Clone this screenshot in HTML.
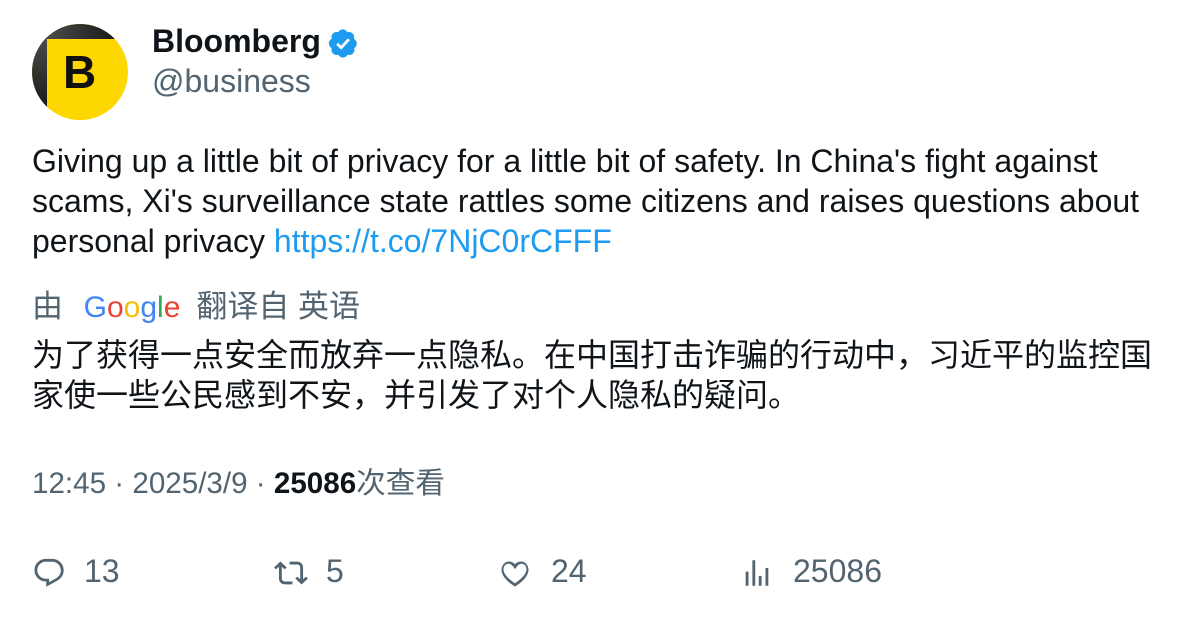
<!DOCTYPE html>
<html><head><meta charset="utf-8"><style>
body{margin:0;width:1196px;height:618px;background:#fff;font-family:"Liberation Sans","Noto Sans CJK SC",sans-serif;color:#0f1419;position:relative;overflow:hidden}
.a{position:absolute}
</style></head><body>
<div class="a" style="left:32px;top:24px;width:96px;height:96px;border-radius:50%;overflow:hidden;background:#ffd700">
 <div class="a" style="left:0;top:0;width:96px;height:15px;background:linear-gradient(90deg,#555,#111)"></div>
 <div class="a" style="left:0;top:0;width:15px;height:96px;background:linear-gradient(180deg,#555,#111)"></div>
 <div class="a" style="left:31px;top:20px;font-size:46px;font-weight:bold;color:#111;line-height:56px">B</div>
</div>
<div class="a" style="left:152px;top:22px;font-size:32px;font-weight:bold;line-height:38px">Bloomberg</div>
<svg class="a" style="left:328px;top:28px" width="31" height="31" viewBox="0 0 22 22"><path fill="#1d9bf0" d="M20.4 11c0-1.4-.8-2.7-2-3.3.4-1.3.1-2.8-.9-3.8s-2.4-1.3-3.8-.9C13.1 1.8 11.9 1 10.5 1S7.9 1.8 7.3 3c-1.300-.4-2.8-.1-3.8.9s-1.3 2.5-.9 3.8C1.4 8.3.6 9.6.6 11s.8 2.6 2 3.3c-.4 1.3-.1 2.8.9 3.8s2.5 1.3 3.8.9c.6 1.2 1.9 2 3.3 2s2.600-.8 3.3-2c1.3.4 2.8.1 3.8-.9s1.3-2.5.9-3.8c1.2-.7 1.8-1.9 1.8-3.3z"/><path d="M6.5 11.2l2.8 2.8 5.5-6" stroke="#fff" stroke-width="2" fill="none"/></svg>
<div class="a" style="left:152px;top:62px;font-size:32px;color:#536471;line-height:38px">@business</div>
<div class="a" style="left:32px;top:141px;width:1150px;font-size:32px;line-height:40px">Giving up a little bit of privacy for a little bit of safety. In China's fight against scams, Xi's surveillance state rattles some citizens and raises questions about personal privacy <span style="color:#1d9bf0">https://t.co/7NjC0rCFFF</span></div>
<div class="a" style="left:32px;top:287px;font-size:31px;line-height:40px;color:#536471;white-space:nowrap">由 <span style="font-size:30px;margin:0 16px 0 12px;font-weight:500"><span style="color:#4285f4">G</span><span style="color:#ea4335">o</span><span style="color:#fbbc05">o</span><span style="color:#4285f4">g</span><span style="color:#34a853">l</span><span style="color:#ea4335">e</span></span>翻译自 英语</div>
<div class="a" style="left:32px;top:335px;width:1125px;font-size:32px;line-height:40px">为了获得一点安全而放弃一点隐私。在中国打击诈骗的行动中，习近平的监控国家使一些公民感到不安，并引发了对个人隐私的疑问。</div>
<div class="a" style="left:32px;top:464px;font-size:29.6px;line-height:40px;color:#536471;white-space:nowrap">12:45 · 2025/3/9 · <b style="color:#0f1419">25086</b>次查看</div>
<div class="a" style="left:0;top:551px;width:1196px;height:40px;font-size:32px;color:#536471;line-height:40px">
 <svg class="a" style="left:32px;top:5px" width="34" height="34" viewBox="0 0 24 24"><path fill="#536471" d="M1.750 10c0-4.4 3.6-8 8.1-8h4.4c4.5 0 8.1 3.6 8.1 8.1 0 3-1.6 5.7-4.2 7.1l-8.1 4.5v-3.7h-.1c-4.5.1-8.2-3.5-8.2-8zm8.1-6c-3.4 0-6.1 2.7-6.1 6 0 3.4 2.7 6.1 6.2 6.1h2.1v2.3l5.1-2.8c1.9-1.1 3.2-3.1 3.2-5.4 0-3.4-2.7-6.1-6.1-6.1H9.8z"/></svg>
 <span class="a" style="left:84px">13</span>
 <svg class="a" style="left:274px;top:5px" width="34" height="34" viewBox="0 0 24 24"><path fill="#536471" d="M4.5 3.88l4.43 4.14-1.36 1.46L5.5 7.55V16c0 1.1.9 2 2 2H13v2H7.5c-2.21 0-4-1.790-4-4V7.55L1.43 9.48.07 8.02 4.5 3.88zM16.5 6H11V4h5.5c2.21 0 4 1.79 4 4v8.45l2.07-1.930 1.36 1.46-4.43 4.14-4.43-4.14 1.36-1.46 2.07 1.93V8c0-1.1-.9-2-2-2z"/></svg>
 <span class="a" style="left:326px">5</span>
 <svg class="a" style="left:498px;top:5px" width="34" height="34" viewBox="0 0 24 24"><path fill="#536471" d="M16.7 5.5c-1.08-.03-2.32.49-3.35 1.92l-1.35 1.86-1.35-1.86C9.6 5.99 8.36 5.470 7.28 5.5c-1.1.04-2.1.6-2.7 1.5-1.2 1.8-.9 4.3 1.1 6.8 1.4 1.8 3.6 3.7 6.3 5.4 2.7-1.7 4.9-3.6 6.3-5.4 2-2.5 2.3-5 1.1-6.8-.6-.9-1.6-1.46-2.7-1.5zM12 21.6c-3.3-2-5.8-4.2-7.4-6.3-2.3-3-2.8-6.3-1.2-8.8C4.3 5 5.8 4 7.5 3.9c1.7-.1 3.3.6 4.5 1.9 1.2-1.3 2.8-2 4.5-1.9 1.7.1 3.2 1 4.1 2.6 1.6 2.5 1.1 5.8-1.2 8.8-1.6 2.1-4.1 4.3-7.4 6.3z"/></svg>
 <span class="a" style="left:551px">24</span>
 <svg class="a" style="left:740px;top:5px" width="34" height="34" viewBox="0 0 24 24"><path fill="#536471" d="M8.75 21V3h2v18h-2zM18 21V8.5h2V21h-2zM4 21l.004-10h2L6 21H4zm9.248 0v-7h2v7h-2z"/></svg>
 <span class="a" style="left:793px">25086</span>
</div>
</body></html>
